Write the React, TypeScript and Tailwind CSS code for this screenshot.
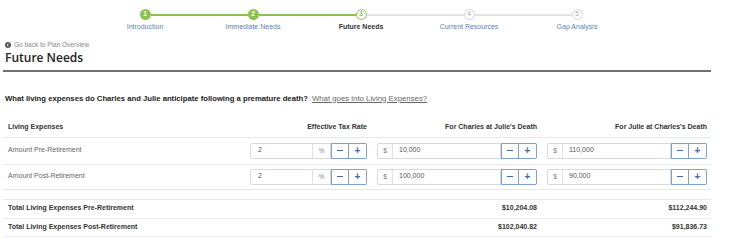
import React from "react";

const steps = [
  { n: 1, label: "Introduction", state: "done", left: "none", right: "green" },
  { n: 2, label: "Immediate Needs", state: "done", left: "green", right: "green" },
  { n: 3, label: "Future Needs", state: "current", left: "green", right: "gray" },
  { n: 4, label: "Current Resources", state: "todo", left: "gray", right: "gray" },
  { n: 5, label: "Gap Analysis", state: "todo", left: "gray", right: "none" },
];

function lineClass(c: string) {
  if (c === "green") return "h-[2px] flex-1 bg-[#8cc152]";
  if (c === "gray") return "h-[2px] flex-1 bg-[#e3e3e3]";
  return "h-[2px] flex-1 bg-transparent";
}

function Circle({ n, state }: { n: number; state: string }) {
  if (state === "done")
    return (
      <div className="w-[11px] h-[11px] rounded-full bg-[#8cc152] text-white text-[6.5px] font-bold flex items-center justify-center leading-none">
        {n}
      </div>
    );
  if (state === "current")
    return (
      <div className="w-[11px] h-[11px] rounded-full bg-white border border-[#8cc152] text-[#8cc152] text-[6.5px] font-bold flex items-center justify-center leading-none">
        {n}
      </div>
    );
  return (
    <div className="w-[11px] h-[11px] rounded-full bg-white border border-[#d6d6d6] text-[#aaa] text-[6.5px] flex items-center justify-center leading-none">
      {n}
    </div>
  );
}

function Stepper() {
  return (
    <div className="flex pl-[91px] pt-[9px] h-[36px]">
      {steps.map((s) => (
        <div key={s.n} className="w-[108px] flex flex-col items-stretch">
          <div className="flex items-center h-[11px]">
            <div className={lineClass(s.left)} />
            <Circle n={s.n} state={s.state} />
            <div className={lineClass(s.right)} />
          </div>
          <div
            className={
              "text-center text-[7px] leading-none mt-[3px] whitespace-nowrap " +
              (s.state === "current" ? "text-[#333] font-bold" : "text-[#5b7fb3]")
            }
          >
            {s.label}
          </div>
        </div>
      ))}
    </div>
  );
}

function Btns() {
  return (
    <div className="flex h-full">
      <div className="w-[18px] h-full border border-[#7da0cc] flex items-center justify-center bg-white">
        <div className="w-[6px] h-[1.5px] bg-[#3d6aa8]" />
      </div>
      <div className="w-[18px] h-full border border-l-0 border-[#7da0cc] rounded-r-[2px] flex items-center justify-center bg-white text-[#3d6aa8] text-[10px] font-bold leading-none">
        +
      </div>
    </div>
  );
}

function PctInput({ v }: { v: string }) {
  return (
    <div className="flex h-[16px] w-[117px] items-stretch">
      <div className="flex-1 flex items-center border border-[#d9d9d9] rounded-l-[2px] bg-white">
        <span className="flex-1 pl-[7px] text-[7px] text-[#555]">{v}</span>
        <span className="w-[18px] h-full border-l border-[#e2e2e2] flex items-center justify-center text-[6.5px] text-[#888]">%</span>
      </div>
      <Btns />
    </div>
  );
}

function MoneyInput({ v }: { v: string }) {
  return (
    <div className="flex h-[16px] w-[160px] items-stretch">
      <div className="flex-1 flex items-center border border-[#d9d9d9] rounded-l-[2px] bg-white">
        <span className="w-[15px] h-full border-r border-[#e2e2e2] flex items-center justify-center text-[6.5px] text-[#777]">$</span>
        <span className="flex-1 pl-[6px] text-[7px] text-[#555]">{v}</span>
      </div>
      <Btns />
    </div>
  );
}

const grid = "grid grid-cols-[1fr_117px_160px_160px] gap-x-[10px] pl-[5px] pr-[4px] items-center";

export default function App() {
  return (
    <div
      className="w-[730px] h-[244px] bg-white overflow-hidden"
      style={{ fontFamily: '"Liberation Sans", Arial, sans-serif' }}
    >
      <Stepper />
      <div className="pl-[3px] w-[711px]">
        <div className="flex items-center gap-[3px] pl-[2px] mt-[5px] h-[8px]">
          <svg width="6" height="6" viewBox="0 0 10 10">
            <circle cx="5" cy="5" r="5" fill="#555" />
            <path d="M5.8 2.8 L3.6 5 L5.8 7.2" stroke="#fff" strokeWidth="1.6" fill="none" />
          </svg>
          <span className="text-[6.5px] text-[#888] leading-none">Go back to Plan Overview</span>
        </div>
        <div
          className="pl-[2px] mt-[2px] text-[12px] leading-[14px] text-[#222] font-semibold"
          style={{ fontFamily: '"Open Sans", "Liberation Sans", sans-serif' }}
        >
          Future Needs
        </div>
        <div className="mt-[5px] h-[1.5px] bg-[#6f6f6f]" />
        <div className="flex items-baseline pl-[2px] mt-[21px] h-[12px]">
          <span className="text-[7.7px] font-bold text-[#222]">
            What living expenses do Charles and Julie anticipate following a premature death?
          </span>
          <span className="ml-[4px] text-[7.8px] text-[#666] underline">What goes into Living Expenses?</span>
        </div>
        <div className={grid + " mt-[13px] h-[20px] border-b border-[#e8e8e8] text-[7px] font-bold text-[#333]"}>
          <div>Living Expenses</div>
          <div className="text-right">Effective Tax Rate</div>
          <div className="text-right">For Charles at Julie&apos;s Death</div>
          <div className="text-right">For Julie at Charles&apos;s Death</div>
        </div>
        <div className={grid + " h-[27px] border-b border-[#e8e8e8] text-[7px] text-[#666]"}>
          <div>Amount Pre-Retirement</div>
          <PctInput v="2" />
          <MoneyInput v="10,000" />
          <MoneyInput v="110,000" />
        </div>
        <div className={grid + " h-[25px] border-b border-[#e8e8e8] text-[7px] text-[#666]"}>
          <div>Amount Post-Retirement</div>
          <PctInput v="2" />
          <MoneyInput v="100,000" />
          <MoneyInput v="90,000" />
        </div>
        <div className="h-[10px] border-b border-[#e8e8e8]" />
        <div className={grid + " h-[19px] border-b border-[#ececec] text-[7px] font-bold text-[#333]"}>
          <div>Total Living Expenses Pre-Retirement</div>
          <div />
          <div className="text-right">$10,204.08</div>
          <div className="text-right">$112,244.90</div>
        </div>
        <div className={grid + " h-[18px] border-b border-[#ececec] text-[7px] font-bold text-[#333]"}>
          <div>Total Living Expenses Post-Retirement</div>
          <div />
          <div className="text-right">$102,040.82</div>
          <div className="text-right">$91,836.73</div>
        </div>
      </div>
    </div>
  );
}
